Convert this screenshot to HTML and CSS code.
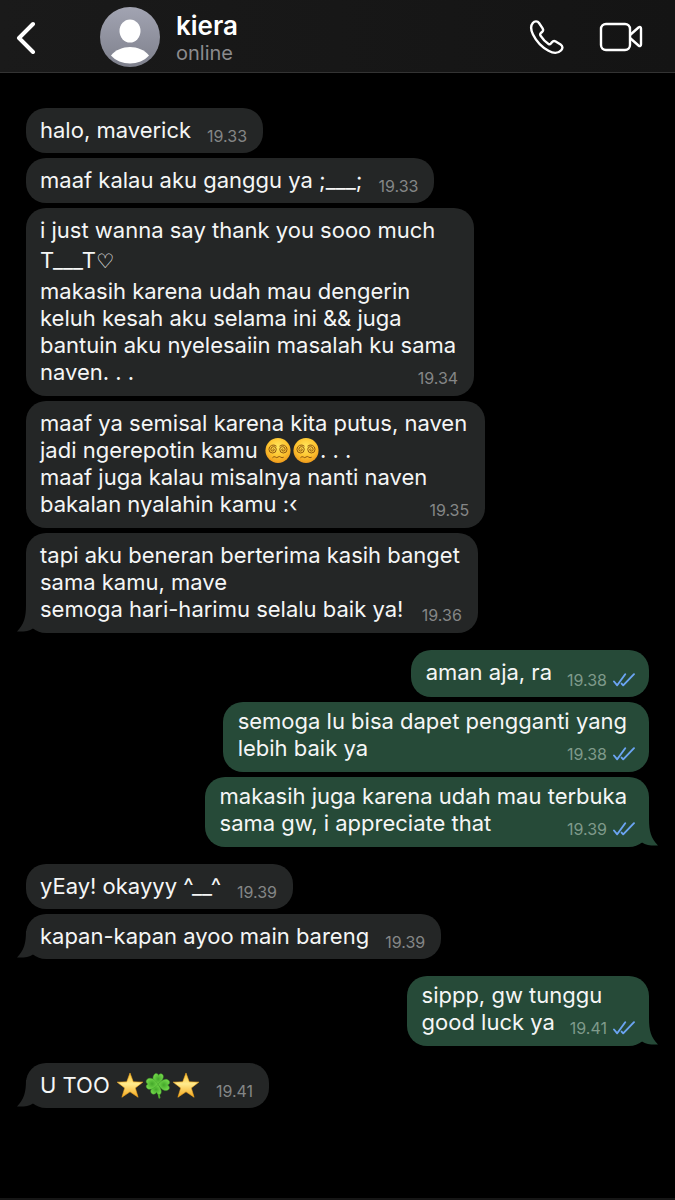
FILE: index.html
```html
<!DOCTYPE html>
<html lang="id">
<head>
  <meta charset="utf-8">
  <meta name="viewport" content="width=device-width, initial-scale=1">
  <title>kiera</title>
  <link rel="stylesheet" href="styles.css">
</head>
<body>
  <!-- Shared icons -->
  <svg class="sprite" aria-hidden="true">
    <defs>
      <radialGradient id="face" cx="50%" cy="35%" r="65%">
        <stop offset="0" stop-color="#ffe75c"/>
        <stop offset="0.6" stop-color="#fdc32f"/>
        <stop offset="1" stop-color="#ee9a1c"/>
      </radialGradient>
      <linearGradient id="gold" x1="0" y1="0" x2="0" y2="1">
        <stop offset="0" stop-color="#fbc02d"/>
        <stop offset="0.45" stop-color="#ffeb8e"/>
        <stop offset="1" stop-color="#f5a81c"/>
      </linearGradient>
      <radialGradient id="leaf">
        <stop offset="0" stop-color="#43a82a"/>
        <stop offset="1" stop-color="#72d64a"/>
      </radialGradient>
      <linearGradient id="avatar-bg" x1="0" y1="0" x2="0" y2="1">
        <stop offset="0" stop-color="#a2a4b2"/>
        <stop offset="1" stop-color="#7e808c"/>
      </linearGradient>
    </defs>
    <symbol id="ticks" viewBox="0 0 22 14">
      <path d="M1 8.5L4.2 12.3L12.2 1.2M8.6 10.6L10.2 12.3L21 1.2" fill="none" stroke="#6ba4f2" stroke-width="1.9" stroke-linecap="round" stroke-linejoin="round"/>
    </symbol>
    <symbol id="tail" viewBox="0 0 26 28">
      <path d="M9 0C9 13 7 19 0 26.5C6 27 12 26 16 23.4L22 26V0Z" fill="currentColor"/>
    </symbol>
    <symbol id="dizzy" viewBox="0 0 28 28">
      <circle cx="14" cy="14" r="13" fill="url(#face)"/>
      <g fill="none" stroke="#8a5310" stroke-width="1" stroke-linecap="round">
        <path d="M8.6 12.8a1 1 0 0 1 1.6 0a1.800 1.800 0 0 1-3.600 0a2.800 2.800 0 0 1 5.600 0a3.800 3.800 0 0 1-7.600 0a4.600 4.600 0 0 1 7.500-3.500"/>
        <path d="M19.400 12.800a1 1 0 0 0-1.600 0a1.800 1.800 0 0 0 3.600 0a2.800 2.800 0 0 0-5.600 0a3.800 3.800 0 0 0 7.600 0a4.600 4.600 0 0 0-7.500-3.500"/>
        <path d="M8.5 21.200q1.400-1.600 2.800-.4t2.700 0t2.700 0t2.800.4"/>
      </g>
    </symbol>
    <symbol id="star" viewBox="0 0 28 28">
      <path d="M14 1L17.400 10.200L27.300 10.500L19.500 16.600L22.400 26.200L14 20.600L5.600 26.200L8.500 16.600L.7 10.500L10.600 10.200Z" fill="url(#gold)" stroke="#f3a91f" stroke-width=".6" stroke-linejoin="round"/>
    </symbol>
    <symbol id="clover" viewBox="0 0 28 28">
      <path d="M14 14Q13.500 21 15.500 26.500" fill="none" stroke="#4fae2e" stroke-width="2" stroke-linecap="round"/>
      <g fill="url(#leaf)" stroke="#3d9c25" stroke-width=".5">
        <path d="M14 13C9 11 8 6 9.500 3.500C11 .5 14 1 14.500 3.500C16.500 .5 20 2 19.500 5.500C19 9 16 11 14 13Z"/>
        <path d="M14 13C17 9 21 6.500 24 8C27 9.500 26.500 12.500 24 13.500C27 15.500 26 19 22.500 19.300C19 19.500 16 16 14 13Z"/>
        <path d="M14 13C17 17 18.500 20.500 16.500 23C14.500 24 13 22.500 12.500 21C11 24 7 23.500 6.500 20.500C6 17.500 10 14.500 14 13Z"/>
        <path d="M14 13C10 17 6 19 3.500 17.500C1 16 1.500 13.500 3.500 12.500C.5 11 1.500 7 5 6.500C9 6 12 9.500 14 13Z"/>
      </g>
    </symbol>
  </svg>

  <header class="topbar">
    <button class="icon-button back" aria-label="Kembali">
      <svg width="20" height="34" viewBox="0 0 20 34" fill="none" stroke="#fff" stroke-width="4" stroke-linecap="round" stroke-linejoin="round"><path d="M17 4L3 18L17 32"/></svg>
    </button>
    <svg class="avatar" viewBox="0 0 60 60" aria-hidden="true">
      <circle cx="30" cy="30" r="30" fill="url(#avatar-bg)"/>
      <ellipse cx="30" cy="24" rx="10.500" ry="11.500" fill="#fff"/>
      <path d="M11 48.500C20 37 40 37 49 48.500C40 59 20 59 11 48.500Z" fill="#fff"/>
    </svg>
    <div class="contact">
      <h1>kiera</h1>
      <p>online</p>
    </div>
    <div class="calls">
      <button class="icon-button" aria-label="Telepon">
        <svg width="36" height="36" viewBox="0 0 36 36" fill="none" stroke="#fff" stroke-width="2.400" stroke-linejoin="round"><path d="M3.800 4C5.500 2 8.500 1.800 10 4L13.600 9.300C14.500 10.800 14.200 12 13 13L11.700 14.200C11 15 11 15.800 11.500 16.600C14 20.500 16.500 23 19.500 25C20.500 25.600 21.200 25.300 21.900 24.500L22.900 23.200C24 21.900 25.200 21.600 26.700 22.500L31.600 25.500C33.900 27 33.900 29.500 32.200 31.300C29 34.600 24 34.300 19.500 31.800C13 28.200 7.500 22.700 4 15.500C2 11.400 1.400 6.800 3.800 4Z"/></svg>
      </button>
      <button class="icon-button" aria-label="Panggilan video">
        <svg width="44" height="30" viewBox="0 0 44 30" fill="none" stroke="#fff" stroke-width="2.400" stroke-linejoin="round"><rect x="2" y="2" width="29" height="26" rx="5"/><path d="M31 13L39.500 5.500C41 4.300 42 5 42 6.500V22.500C42 24 41 24.700 39.500 23.500L31 16"/></svg>
      </button>
    </div>
  </header>

  <main class="chat">
    <div class="group">
      <div class="bubble">
        <div class="last">halo, maverick <time>19.33</time></div>
      </div>
      <div class="bubble">
        <div class="last">maaf kalau aku ganggu ya ;___; <time>19.33</time></div>
      </div>
      <div class="bubble long">
        i just wanna say thank you sooo much<br>
        <span class="tall">T___T<span class="heart">♡</span></span><br>
        makasih karena udah mau dengerin<br>
        keluh kesah aku selama ini &amp;&amp; juga<br>
        bantuin aku nyelesaiin masalah ku sama
        <div class="last">naven. . . <time>19.34</time></div>
      </div>
      <div class="bubble long">
        maaf ya semisal karena kita putus, naven<br>
        jadi ngerepotin kamu <svg class="emoji" role="img" aria-label="😵‍💫"><use href="#dizzy"/></svg><svg class="emoji" role="img" aria-label="😵‍💫"><use href="#dizzy"/></svg>. . .<br>
        maaf juga kalau misalnya nanti naven
        <div class="last">bakalan nyalahin kamu :‹ <time>19.35</time></div>
      </div>
      <div class="bubble long">
        tapi aku beneran berterima kasih banget<br>
        sama kamu, mave
        <div class="last">semoga hari-harimu selalu baik ya! <time>19.36</time></div>
        <svg class="tail" aria-hidden="true"><use href="#tail"/></svg>
      </div>
    </div>

    <div class="group sent">
      <div class="bubble short">
        <div class="last">aman aja, ra <span class="meta"><time>19.38</time><svg class="ticks" role="img" aria-label="Dibaca"><use href="#ticks"/></svg></span></div>
      </div>
      <div class="bubble">
        semoga lu bisa dapet pengganti yang
        <div class="last">lebih baik ya <span class="meta"><time>19.38</time><svg class="ticks" role="img" aria-label="Dibaca"><use href="#ticks"/></svg></span></div>
      </div>
      <div class="bubble">
        makasih juga karena udah mau terbuka
        <div class="last">sama gw, i appreciate that <span class="meta"><time>19.39</time><svg class="ticks" role="img" aria-label="Dibaca"><use href="#ticks"/></svg></span></div>
        <svg class="tail" aria-hidden="true"><use href="#tail"/></svg>
      </div>
    </div>

    <div class="group">
      <div class="bubble">
        <div class="last">yEay! okayyy ^__^ <time>19.39</time></div>
      </div>
      <div class="bubble">
        <div class="last">kapan-kapan ayoo main bareng <time>19.39</time></div>
        <svg class="tail" aria-hidden="true"><use href="#tail"/></svg>
      </div>
    </div>

    <div class="group sent">
      <div class="bubble">
        sippp, gw tunggu
        <div class="last">good luck ya <span class="meta"><time>19.41</time><svg class="ticks" role="img" aria-label="Dibaca"><use href="#ticks"/></svg></span></div>
        <svg class="tail" aria-hidden="true"><use href="#tail"/></svg>
      </div>
    </div>

    <div class="group">
      <div class="bubble">
        <div class="last"><span>U TOO <svg class="emoji" role="img" aria-label="⭐"><use href="#star"/></svg><svg class="emoji" role="img" aria-label="🍀"><use href="#clover"/></svg><svg class="emoji" role="img" aria-label="⭐"><use href="#star"/></svg></span> <time>19.41</time></div>
        <svg class="tail" aria-hidden="true"><use href="#tail"/></svg>
      </div>
    </div>
  </main>
</body>
</html>
```

FILE: styles.css
```css
* {
  box-sizing: border-box;
}

body {
  margin: 0;
  min-height: 100vh;
  display: flex;
  flex-direction: column;
  background-color: #000;
  color: #f5f6f6;
  font-family: Inter, Roboto, sans-serif;
  font-size: 22px;
  line-height: 27px;
  border-bottom: 2px solid #161616;
}

.sprite {
  position: absolute;
  width: 0;
  height: 0;
}

/* Header */
.topbar {
  display: flex;
  align-items: center;
  height: 73px;
  padding: 2px 32px 0 16px;
  background: linear-gradient(90deg, #1a1a1a, #141414);
  border-bottom: 1px solid #333;
}

.icon-button {
  display: flex;
  padding: 0;
  border: none;
  background: none;
  cursor: pointer;
}

.avatar {
  width: 60px;
  height: 60px;
  margin-left: 64px;
}

.contact {
  margin-left: 16px;
  padding-top: 4px;
}

.contact h1 {
  margin: 0;
  font-size: 26px;
  font-weight: 600;
  line-height: 28px;
  color: #fff;
}

.contact p {
  margin: 0;
  font-size: 20px;
  line-height: 26px;
  color: #8b8b8e;
}

.calls {
  display: flex;
  align-items: center;
  gap: 34px;
  margin-left: auto;
}

/* Messages */
.chat {
  display: flex;
  flex-direction: column;
  gap: 17px;
  padding: 35px 26px;
}

.group {
  display: flex;
  flex-direction: column;
  align-items: flex-start;
  gap: 5px;
}

.bubble {
  position: relative;
  max-width: 80%;
  padding: 9px 18px 9px 14px;
  border-radius: 20px;
  background-color: #242626;
}

.long {
  padding-bottom: 10px;
}

.last {
  display: flex;
  justify-content: space-between;
  align-items: flex-end;
  gap: 16px;
}

time {
  font-size: 16px;
  line-height: 20px;
  margin: 0 -2px -2px 0;
  color: #848687;
}

.tall {
  line-height: 33px;
}

.heart {
  font-family: "DejaVu Sans", sans-serif;
  font-size: 20px;
  font-weight: bold;
}

.emoji {
  width: 28px;
  height: 27px;
  vertical-align: top;
}

.tail {
  position: absolute;
  left: -9px;
  bottom: 0;
  width: 26px;
  height: 28px;
  color: #242626;
}

/* Sent messages */
.sent {
  align-items: flex-end;
}

.sent .bubble {
  padding: 6px 22px 10px 15px;
  background-color: #264a38;
}

.sent .short {
  padding-top: 9px;
  padding-bottom: 11px;
}

.sent .last {
  gap: 15px;
}

.meta {
  display: flex;
  align-items: center;
  gap: 6px;
  margin: 0 -8px -2px 0;
}

.short .meta {
  margin-bottom: -4px;
}

.meta time {
  margin: 0;
  color: #7f9a8b;
}

.ticks {
  width: 22px;
  height: 14px;
}

.sent .tail {
  left: auto;
  right: -9px;
  transform: scaleX(-1);
  color: #264a38;
}
```
